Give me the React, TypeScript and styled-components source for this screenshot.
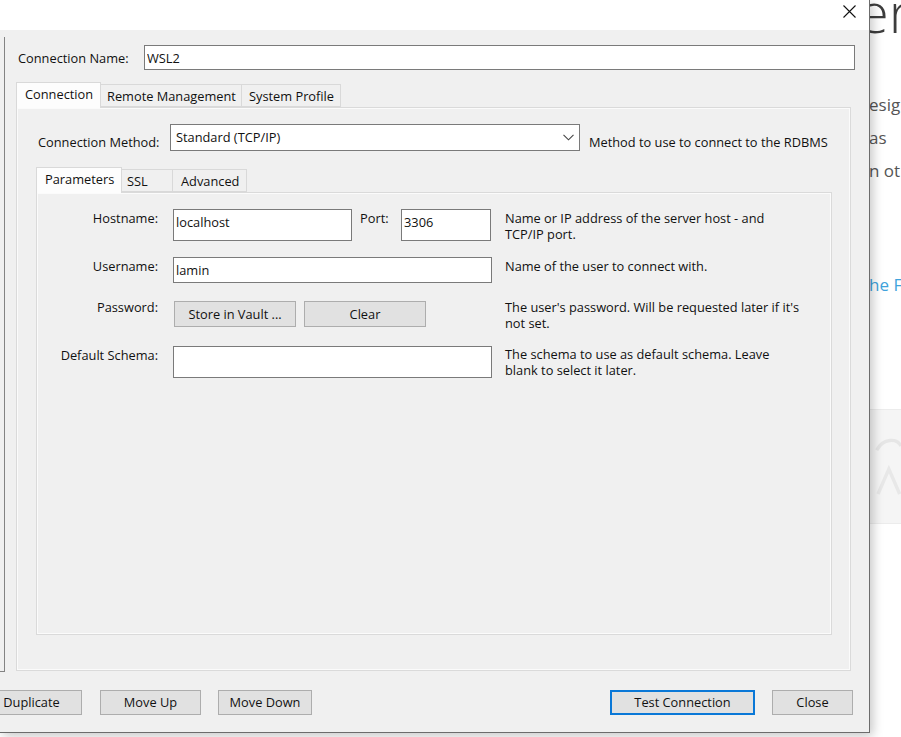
import React from "react";
import styled, { createGlobalStyle } from "styled-components";

const Global = createGlobalStyle`
  html, body { margin: 0; padding: 0; background: #ffffff; overflow: hidden; }
  body { font-family: "Open Sans", "Liberation Sans", sans-serif; font-size: 12.8px; color: #111; }
  * { box-sizing: border-box; }
`;

const Desktop = styled.div`
  display: flex;
  width: 901px;
  height: 737px;
  overflow: hidden;
`;

const Dialog = styled.div`
  position: relative;
  z-index: 1;
  flex: 0 0 870px;
  height: 733px;
  display: flex;
  flex-direction: column;
  border-right: 1px solid #6c6c6c;
  border-bottom: 1px solid #6c6c6c;
  box-shadow: 3px 3px 10px rgba(0, 0, 0, 0.22);
`;

const TitleBar = styled.div`
  height: 30px;
  background: #ffffff;
  display: flex;
  justify-content: flex-end;
  align-items: flex-start;
  padding: 5px 13px 0 0;
`;

const Body = styled.div`
  flex: 1;
  background: #f0f0f0;
  display: flex;
  flex-direction: column;
`;

const Main = styled.div`
  display: flex;
  height: 642px;
`;

const ListPanel = styled.div`
  flex: 0 0 5px;
  margin-top: 7px;
  height: 635px;
  border-right: 1px solid #838383;
  border-bottom: 1px solid #838383;
  background: #f0f0f0;
`;

const Content = styled.div`
  margin-left: 11px;
  width: 839px;
  padding-top: 15px;
  display: flex;
  flex-direction: column;
`;

const NameRow = styled.div`
  display: flex;
  align-items: center;
  height: 25px;
`;

const NameLabel = styled.span`
  width: 128px;
  padding-left: 2px;
  white-space: nowrap;
`;

const TextInput = styled.input<{ $w: number; $h: number; $lift?: number }>`
  width: ${(p) => p.$w}px;
  height: ${(p) => p.$h}px;
  border: 1px solid #7a7a7a;
  background: #ffffff;
  font: inherit;
  color: #111;
  padding: 0 2px ${(p) => p.$lift ?? 0}px 2px;
  margin: 0;
  outline: none;
`;

const TabStrip = styled.div<{ $top: number }>`
  display: flex;
  align-items: flex-end;
  height: 25px;
  margin-top: ${(p) => p.$top}px;
  position: relative;
  z-index: 2;
`;

const Tab = styled.div<{ $w: number; $active?: boolean; $pl: number }>`
  width: ${(p) => p.$w}px;
  height: ${(p) => (p.$active ? 26 : 23)}px;
  margin-bottom: ${(p) => (p.$active ? -1 : 0)}px;
  margin-left: -1px;
  &:first-child { margin-left: 0; }
  padding-left: ${(p) => p.$pl}px;
  padding-bottom: ${(p) => (p.$active ? 4 : 0)}px;
  display: flex;
  align-items: center;
  white-space: nowrap;
  border: 1px solid #d9d9d9;
  border-bottom: ${(p) => (p.$active ? "none" : "1px solid #d9d9d9")};
  background: ${(p) => (p.$active ? "#fdfdfd" : "#f0f0f0")};
  position: relative;
  z-index: ${(p) => (p.$active ? 2 : 1)};
`;

const Panel = styled.div<{ $w: number; $h: number }>`
  width: ${(p) => p.$w}px;
  height: ${(p) => p.$h}px;
  border: 1px solid #dadada;
  box-shadow: inset 0 0 0 1px #fbfbfb;
  background: #f0f0f0;
  display: flex;
  flex-direction: column;
`;

const OuterPanel = styled(Panel)`
  padding: 16px 0 0 19px;
`;

const InnerPanel = styled(Panel)`
  padding-top: 16px;
`;

const MethodRow = styled.div`
  display: flex;
  align-items: flex-start;
  height: 27px;
`;

const MethodLabel = styled.span`
  width: 134px;
  padding: 10px 0 0 2px;
  line-height: 16px;
  white-space: nowrap;
`;

const Select = styled.div`
  width: 410px;
  height: 27px;
  border: 1px solid #7a7a7a;
  background: #ffffff;
  display: flex;
  align-items: center;
  justify-content: space-between;
  padding: 0 5px 1px 5px;
`;

const MethodHint = styled.span`
  margin-left: 9px;
  padding-top: 10px;
  line-height: 16px;
  white-space: nowrap;
`;

const FormRow = styled.div<{ $top: number; $h: number }>`
  display: flex;
  align-items: flex-start;
  height: ${(p) => p.$h}px;
  margin-top: ${(p) => p.$top}px;
`;

const FieldLabel = styled.span<{ $dy: number }>`
  width: 121px;
  margin-right: 15px;
  text-align: right;
  line-height: 16px;
  padding-top: ${(p) => Math.max(p.$dy, 0)}px;
  margin-top: ${(p) => Math.min(p.$dy, 0)}px;
  white-space: nowrap;
`;

const FieldCell = styled.div`
  width: 319px;
  display: flex;
  align-items: flex-start;
`;

const PortLabel = styled.span`
  width: 41px;
  margin-left: 8px;
  padding-top: 1px;
  line-height: 16px;
`;

const Hint = styled.div<{ $dy: number }>`
  width: 318px;
  margin-left: 13px;
  line-height: 16px;
  padding-top: ${(p) => Math.max(p.$dy, 0)}px;
  margin-top: ${(p) => Math.min(p.$dy, 0)}px;
`;

const Button = styled.button<{ $w: number; $h?: number; $focus?: boolean }>`
  width: ${(p) => p.$w}px;
  height: ${(p) => p.$h ?? 25}px;
  margin: 0;
  padding: 0 0 1px 0;
  font: inherit;
  color: #111;
  background: #e1e1e1;
  border: ${(p) => (p.$focus ? "2px solid #0a78d7" : "1px solid #adadad")};
  white-space: nowrap;
`;

const ButtonPair = styled.div`
  display: flex;
  gap: 8px;
  padding-left: 1px;
`;

const Footer = styled.div`
  display: flex;
  justify-content: space-between;
  padding: 18px 16px 0 0;
`;

const ButtonGroup = styled.div<{ $shift?: number }>`
  display: flex;
  gap: 17px;
  margin-left: ${(p) => p.$shift ?? 0}px;
`;

const BackPage = styled.div`
  flex: 1;
  background: #ffffff;
  overflow: hidden;
  display: flex;
  flex-direction: column;
`;

const BigWord = styled.div`
  font-size: 56px;
  font-weight: 300;
  color: #3d3d3d;
  line-height: 56px;
  margin: -17px 0 0 -12px;
  white-space: nowrap;
`;

const PageLine = styled.div<{ $blue?: boolean; $top: number }>`
  font-size: 17px;
  line-height: 33px;
  color: ${(p) => (p.$blue ? "#3fa3dc" : "#555555")};
  margin: ${(p) => p.$top}px 0 0 -1px;
  white-space: nowrap;
`;

const PageCard = styled.div`
  margin-top: 108px;
  height: 115px;
  background: #f5f5f5;
  border-top: 1px solid #ececec;
  border-bottom: 1px solid #ececec;
  display: flex;
  align-items: center;
  padding-left: 4px;
`;

const CloseIcon = () => (
  <svg width="13" height="13" viewBox="0 0 13 13">
    <path d="M0.5 0.5 L12.5 12.5 M12.5 0.5 L0.5 12.5" stroke="#111" strokeWidth="1.1" fill="none" />
  </svg>
);

const Chevron = () => (
  <svg width="11" height="7" viewBox="0 0 11 7">
    <path d="M0.5 0.8 L5.5 5.8 L10.5 0.8" stroke="#444" strokeWidth="1.1" fill="none" />
  </svg>
);

const FaintLogo = () => (
  <svg width="40" height="90" viewBox="0 0 40 90">
    <path d="M4 20 C 14 2, 34 2, 40 14" stroke="#e6e6e6" strokeWidth="5" fill="none" />
    <path d="M6 85 L22 48 L38 85" stroke="#e8e8e8" strokeWidth="5" fill="none" />
  </svg>
);

export default function App() {
  return (
    <>
      <Global />
      <Desktop>
        <Dialog>
          <TitleBar>
            <CloseIcon />
          </TitleBar>
          <Body>
            <Main>
              <ListPanel />
              <Content>
                <NameRow>
                  <NameLabel>Connection Name:</NameLabel>
                  <TextInput $w={711} $h={25} defaultValue="WSL2" readOnly />
                </NameRow>
                <TabStrip $top={12}>
                  <Tab $w={85} $pl={8} $active>Connection</Tab>
                  <Tab $w={142} $pl={6}>Remote Management</Tab>
                  <Tab $w={100} $pl={7}>System Profile</Tab>
                </TabStrip>
                <OuterPanel $w={835} $h={564}>
                  <MethodRow>
                    <MethodLabel>Connection Method:</MethodLabel>
                    <Select>
                      <span>Standard (TCP/IP)</span>
                      <Chevron />
                    </Select>
                    <MethodHint>Method to use to connect to the RDBMS</MethodHint>
                  </MethodRow>
                  <TabStrip $top={16}>
                    <Tab $w={86} $pl={8} $active>Parameters</Tab>
                    <Tab $w={52} $pl={5}>SSL</Tab>
                    <Tab $w={75} $pl={8}>Advanced</Tab>
                  </TabStrip>
                  <InnerPanel $w={796} $h={443}>
                    <FormRow $top={0} $h={32}>
                      <FieldLabel $dy={1}>Hostname:</FieldLabel>
                      <FieldCell>
                        <TextInput $w={179} $h={32} $lift={6} defaultValue="localhost" readOnly />
                        <PortLabel>Port:</PortLabel>
                        <TextInput $w={90} $h={32} $lift={6} defaultValue="3306" readOnly />
                      </FieldCell>
                      <Hint $dy={1}>
                        Name or IP address of the server host - and
                        <br />
                        TCP/IP port.
                      </Hint>
                    </FormRow>
                    <FormRow $top={16} $h={26}>
                      <FieldLabel $dy={1}>Username:</FieldLabel>
                      <FieldCell>
                        <TextInput $w={319} $h={26} defaultValue="lamin" readOnly />
                      </FieldCell>
                      <Hint $dy={1}>Name of the user to connect with.</Hint>
                    </FormRow>
                    <FormRow $top={18} $h={26}>
                      <FieldLabel $dy={-2}>Password:</FieldLabel>
                      <FieldCell>
                        <ButtonPair>
                          <Button $w={122} $h={26}>Store in Vault ...</Button>
                          <Button $w={122} $h={26}>Clear</Button>
                        </ButtonPair>
                      </FieldCell>
                      <Hint $dy={-2}>
                        The user's password. Will be requested later if it's
                        <br />
                        not set.
                      </Hint>
                    </FormRow>
                    <FormRow $top={19} $h={32}>
                      <FieldLabel $dy={1}>Default Schema:</FieldLabel>
                      <FieldCell>
                        <TextInput $w={319} $h={32} readOnly />
                      </FieldCell>
                      <Hint $dy={0}>
                        The schema to use as default schema. Leave
                        <br />
                        blank to select it later.
                      </Hint>
                    </FormRow>
                  </InnerPanel>
                </OuterPanel>
              </Content>
            </Main>
            <Footer>
              <ButtonGroup $shift={-19}>
                <Button $w={101} style={{ marginRight: 1 }}>Duplicate</Button>
                <Button $w={101}>Move Up</Button>
                <Button $w={94}>Move Down</Button>
              </ButtonGroup>
              <ButtonGroup>
                <Button $w={145} $focus>Test Connection</Button>
                <Button $w={81}>Close</Button>
              </ButtonGroup>
            </Footer>
          </Body>
        </Dialog>
        <BackPage>
          <BigWord>er</BigWord>
          <PageLine $top={49}>esign</PageLine>
          <PageLine $top={0}>as</PageLine>
          <PageLine $top={0}>n other</PageLine>
          <PageLine $top={81} $blue>he F</PageLine>
          <PageCard>
            <FaintLogo />
          </PageCard>
        </BackPage>
      </Desktop>
    </>
  );
}
